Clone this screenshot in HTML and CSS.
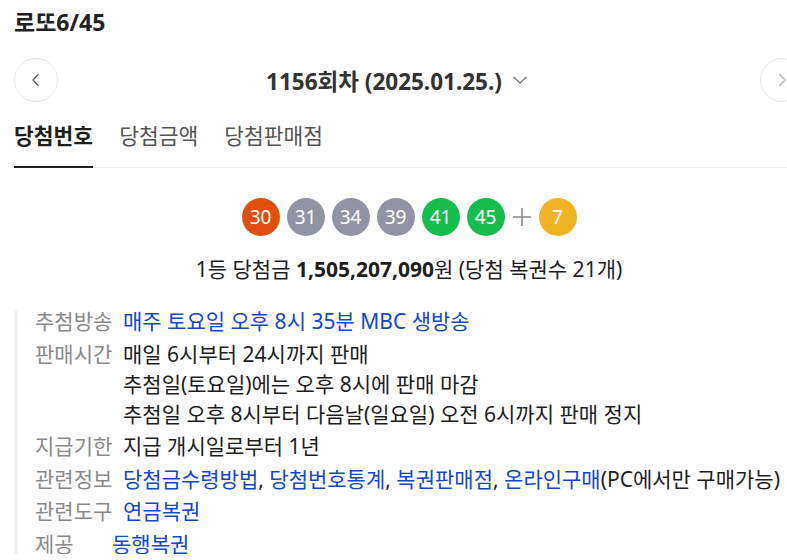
FILE: index.html
```html
<!DOCTYPE html>
<html lang="ko">
<head>
  <meta charset="UTF-8" />
  <meta name="viewport" content="width=device-width, initial-scale=1" />
  <title>로또6/45</title>
  <link rel="stylesheet" href="styles.css">
</head>
<body>
  <div class="lotto">
    <h1 class="title">로또6/45</h1>

    <div class="round-nav">
      <button class="nav-btn" aria-label="이전 회차">
        <svg width="10" height="16" viewBox="0 0 10 16"><path d="M7.5 2 L2 8 L7.5 14" fill="none" stroke="#666" stroke-width="1.4"/></svg>
      </button>
      <div class="round-title">
        <span>1156회차 (2025.01.25.)</span>
        <svg width="16" height="10" viewBox="0 0 16 10"><path d="M1.5 2 L8 8 L14.5 2" fill="none" stroke="#777" stroke-width="1.4"/></svg>
      </div>
      <button class="nav-btn" aria-label="다음 회차">
        <svg width="10" height="16" viewBox="0 0 10 16"><path d="M2.5 2 L8 8 L2.5 14" fill="none" stroke="#bbb" stroke-width="1.4"/></svg>
      </button>
    </div>

    <div class="tabs">
      <a class="tab active">당첨번호</a>
      <a class="tab">당첨금액</a>
      <a class="tab">당첨판매점</a>
    </div>

    <div class="balls">
      <span class="ball red">30</span>
      <span class="ball gray">31</span>
      <span class="ball gray">34</span>
      <span class="ball gray">39</span>
      <span class="ball green">41</span>
      <span class="ball green">45</span>
      <span class="plus">
        <svg width="20" height="20" viewBox="0 0 20 20"><path d="M10 1 V19 M1 10 H19" stroke="#888" stroke-width="1.6"/></svg>
      </span>
      <span class="ball yellow">7</span>
    </div>

    <p class="prize">1등 당첨금 <b>1,505,207,090</b>원 (당첨 복권수 21개)</p>

    <div class="info">
      <div class="row">
        <span class="label">추첨방송</span>
        <div class="value"><a>매주 토요일 오후 8시 35분 MBC 생방송</a></div>
      </div>
      <div class="row">
        <span class="label">판매시간</span>
        <div class="value lines">
          <div>매일 6시부터 24시까지 판매</div>
          <div>추첨일(토요일)에는 오후 8시에 판매 마감</div>
          <div>추첨일 오후 8시부터 다음날(일요일) 오전 6시까지 판매 정지</div>
        </div>
      </div>
      <div class="row">
        <span class="label">지급기한</span>
        <div class="value">지급 개시일로부터 1년</div>
      </div>
      <div class="row">
        <span class="label">관련정보</span>
        <div class="value"><a>당첨금수령방법</a>, <a>당첨번호통계</a>, <a>복권판매점</a>, <a>온라인구매</a>(PC에서만 구매가능)</div>
      </div>
      <div class="row">
        <span class="label">관련도구</span>
        <div class="value"><a>연금복권</a></div>
      </div>
      <div class="row">
        <span class="label short">제공</span>
        <div class="value"><a>동행복권</a></div>
      </div>
    </div>
  </div>
</body>
</html>
```

FILE: styles.css
```css
html, body {
  margin: 0;
  overflow: hidden;
}
body {
  font-family: "Noto Sans", "Noto Sans CJK KR", sans-serif;
  color: #1e1e1e;
  background: #fff;
}
.lotto {
  width: 790px;
  margin-left: 14px;
  padding-top: 8px;
}
.title {
  margin: 0;
  font-size: 23px;
  line-height: 28px;
  font-weight: 700;
  color: #222;
}
.round-nav {
  margin-top: 22px;
  display: flex;
  align-items: center;
  justify-content: space-between;
}
.nav-btn {
  width: 44px;
  height: 44px;
  border-radius: 50%;
  border: 1px solid #e4e4e4;
  background: #fff;
  padding: 0;
  display: flex;
  align-items: center;
  justify-content: center;
}
.round-title {
  display: flex;
  align-items: center;
  gap: 10px;
  padding-right: 24px;
  font-size: 22.5px;
  font-weight: 700;
  color: #333;
}
.tabs {
  margin-top: 16px;
  display: flex;
  gap: 26px;
  border-bottom: 1px solid #ececec;
}
.tab {
  font-size: 21.5px;
  line-height: 36px;
  padding-bottom: 12px;
  color: #555;
}
.tab.active {
  font-weight: 700;
  color: #1e1e1e;
  border-bottom: 2px solid #222;
  margin-bottom: -1px;
}
.balls {
  margin-top: 30px;
  display: flex;
  justify-content: center;
  align-items: center;
  gap: 7px;
}
.ball {
  width: 38px;
  height: 38px;
  border-radius: 50%;
  color: #fff;
  font-size: 19px;
  display: flex;
  align-items: center;
  justify-content: center;
}
.ball.red { background: #e04f10; }
.ball.gray { background: #9195a3; }
.ball.green { background: #16bd4c; }
.ball.yellow { background: #f0b323; }
.plus {
  display: flex;
}
.prize {
  margin: 20px 0 0;
  text-align: center;
  font-size: 21px;
  line-height: 26px;
}
.prize b {
  font-weight: 700;
}
.info {
  margin-top: 29px;
  border-left: 4px solid #f0f0f0;
  padding-left: 17px;
  display: flex;
  flex-direction: column;
  gap: 12.5px;
  font-size: 21px;
  line-height: 20px;
}
.row {
  display: flex;
}
.label {
  width: 88px;
  flex-shrink: 0;
  color: #8a8a8a;
}
.label.short {
  width: 77px;
}
.value {
  white-space: nowrap;
}
.value a {
  color: #1448c4;
}
.lines {
  display: flex;
  flex-direction: column;
  gap: 10px;
}
```
